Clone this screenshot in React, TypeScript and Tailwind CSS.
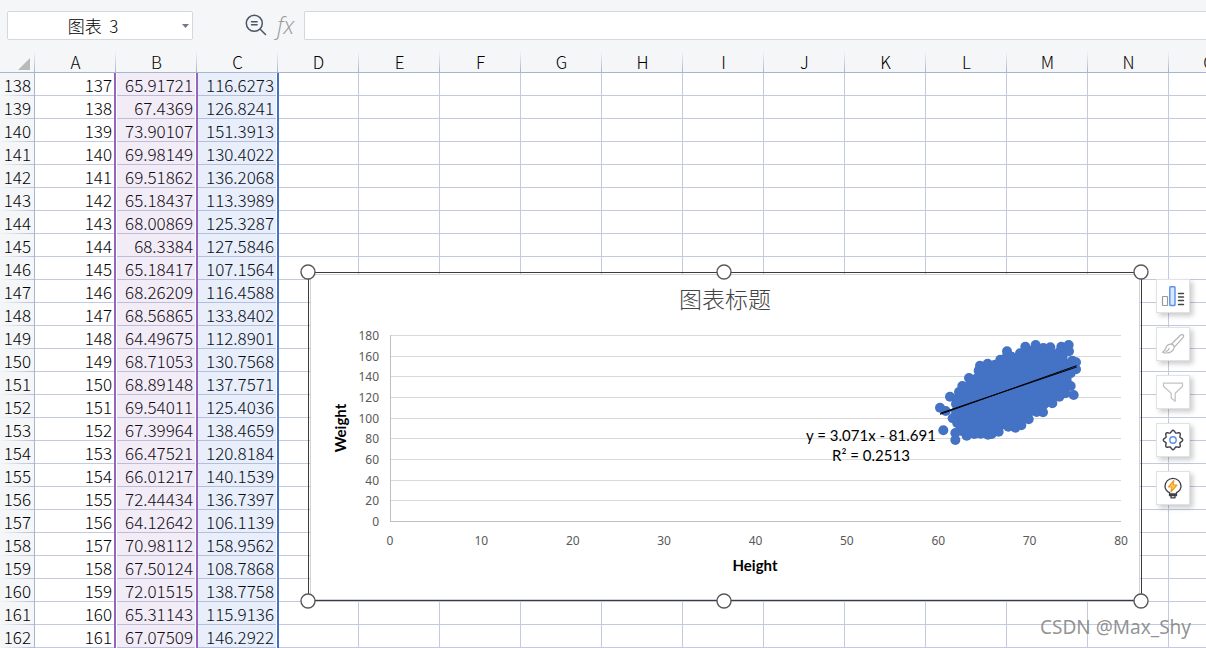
import { useState } from 'react';
import type { ReactNode } from 'react';

const columns = ['A', 'B', 'C', 'D', 'E', 'F', 'G', 'H', 'I', 'J', 'K', 'L', 'M', 'N', 'O'];

const firstRow = 138;

// [height, weight] in columns B and C
const records = [
    ['65.91721', '116.6273'],
    ['67.4369', '126.8241'],
    ['73.90107', '151.3913'],
    ['69.98149', '130.4022'],
    ['69.51862', '136.2068'],
    ['65.18437', '113.3989'],
    ['68.00869', '125.3287'],
    ['68.3384', '127.5846'],
    ['65.18417', '107.1564'],
    ['68.26209', '116.4588'],
    ['68.56865', '133.8402'],
    ['64.49675', '112.8901'],
    ['68.71053', '130.7568'],
    ['68.89148', '137.7571'],
    ['69.54011', '125.4036'],
    ['67.39964', '138.4659'],
    ['66.47521', '120.8184'],
    ['66.01217', '140.1539'],
    ['72.44434', '136.7397'],
    ['64.12642', '106.1139'],
    ['70.98112', '158.9562'],
    ['67.50124', '108.7868'],
    ['72.01515', '138.7758'],
    ['65.31143', '115.9136'],
    ['67.07509', '146.2922'],
];

const yTicks = [180, 160, 140, 120, 100, 80, 60, 40, 20, 0];
const xTicks = [0, 10, 20, 30, 40, 50, 60, 70, 80];

const plot = { left: 82, right: 813, top: 63, bottom: 249 };
const xAt = (v: number) => plot.left + ((plot.right - plot.left) * v) / 80;
const yAt = (v: number) => Math.round(plot.bottom - ((plot.bottom - plot.top) * v) / 180) + 0.5;

// Outer points of the cloud, clockwise
const edgePoints = [
    [108, 222], [113, 205], [117, 186], [127, 168], [147, 144], [176, 122], [180, 107], [203, 101],
    [225, 104], [241, 89], [261, 78], [275, 80], [300, 70], [316, 50], [347, 45], [370, 54],
    [391, 52], [418, 66], [428, 80], [457, 92], [468, 97], [468, 118], [452, 130], [440, 150],
    [452, 168], [436, 190], [418, 200], [397, 220], [369, 247], [350, 246], [326, 268], [304, 286],
    [286, 293], [265, 290], [236, 305], [215, 312], [204, 314], [182, 311], [163, 312], [140, 317],
    [125, 303], [106, 309], [112, 280], [98, 265], [108, 245],
];

const outliers = [
    [60, 233], [77, 243], [90, 200], [70, 301], [106, 330], [261, 64], [424, 50], [446, 45], [447, 64], [461, 195],
];

const handles = [
    [0, 0], [416, 0], [833, 0],
    [0, 329], [416, 329], [833, 329],
];

// Eight-toothed gear outline around (12, 12)
const gear = Array.from({ length: 96 }, (_, i) => {
    const a = (i / 96) * Math.PI * 2;
    const r = 8.6 + 1.1 * Math.cos(a * 8);
    return `${(12 + r * Math.sin(a)).toFixed(2)},${(12 - r * Math.cos(a)).toFixed(2)}`;
}).join(' ');

function ScatterChart() {
    return (
        <svg
            role="img"
            aria-label="图表标题"
            width="834"
            height="330"
            className="absolute left-[308px] top-[221px] overflow-visible"
        >
            <rect x="2" y="2" width="830" height="326" fill="#fff" />
            <rect x="2.5" y="2.5" width="829" height="325" fill="none" stroke="#d4d4d4" />
            <rect x="0.5" y="0.5" width="833" height="328" fill="none" stroke="#3b3b3f" />

            <text x="417" y="36" textAnchor="middle" className="fill-[#444] font-['Noto_Sans_CJK_SC',sans-serif] text-[23px] font-light">
                图表标题
            </text>

            {/* Gridlines and axes */}
            {yTicks.map((v) => (
                <g key={v}>
                    <line x1={plot.left} x2={plot.right} y1={yAt(v)} y2={yAt(v)} stroke={v === 0 ? '#bfbfbf' : '#d9d9d9'} />
                    <text x="71" y={yAt(v) + 4} textAnchor="end" className="fill-[#595959] font-['Noto_Sans',sans-serif] text-[12px]">
                        {v}
                    </text>
                </g>
            ))}
            <line x1="82.5" x2="82.5" y1={plot.top} y2={plot.bottom + 1} stroke="#bfbfbf" />
            {xTicks.map((v) => (
                <text key={v} x={xAt(v)} y="273" textAnchor="middle" className="fill-[#595959] font-['Noto_Sans',sans-serif] text-[12px]">
                    {v}
                </text>
            ))}

            {/* Axis titles */}
            <text x="447" y="299" textAnchor="middle" className="fill-black font-['Lato',sans-serif] text-[15px] font-bold">
                Height
            </text>
            <text
                transform="translate(38 156) rotate(-90)"
                textAnchor="middle"
                className="fill-black font-['Lato',sans-serif] text-[15px] font-bold"
            >
                Weight
            </text>

            {/* Points */}
            <svg x="612" y="58" width="180" height="130" viewBox="0 0 540 390">
                <g fill="#4472c4">
                    <polygon points={edgePoints.map((p) => p.join(',')).join(' ')} />
                    {[...edgePoints, ...outliers].map(([x, y]) => (
                        <circle key={`${x}-${y}`} cx={x} cy={y} r="15" />
                    ))}
                </g>
                <path d="M60 253 470 107M60 250 470 111" stroke="#000" strokeWidth="3" fill="none" />
            </svg>

            <text x="563" y="169" textAnchor="middle" className="fill-black font-['Lato',sans-serif] text-[15px]">
                y = 3.071x - 81.691
            </text>
            <text x="563" y="189" textAnchor="middle" className="fill-black font-['Lato',sans-serif] text-[15px]">
                R² = 0.2513
            </text>

            {handles.map(([x, y]) => (
                <circle key={`${x}-${y}`} cx={x} cy={y} r="7" fill="#fff" stroke="#595959" strokeWidth="1.4" />
            ))}
        </svg>
    );
}

function ToolButton({ label, children }: { label: string; children: ReactNode }) {
    return (
        <button
            type="button"
            aria-label={label}
            className="flex size-[34px] items-center justify-center border border-[#e1e2e5] bg-white shadow-[3px_3px_5px_rgba(0,0,0,0.2)]"
        >
            <svg width="24" height="24" viewBox="0 0 24 24" fill="none" strokeLinecap="round" strokeLinejoin="round">
                {children}
            </svg>
        </button>
    );
}

function ChartTools() {
    return (
        <div className="absolute left-[1156px] top-[228px] flex flex-col gap-[14px]">
            <ToolButton label="图表元素">
                <rect x="1.5" y="12.5" width="5" height="9" rx="0.5" stroke="#999" strokeWidth="1.2" />
                <rect x="8.8" y="2.8" width="5.2" height="18.7" rx="0.8" fill="#d9e8ff" stroke="#5b8fe8" strokeWidth="1.4" />
                <path d="M17.5 9.5h5M17.5 13h5M17.5 16.5h5M17.5 20.5h5" stroke="#444" strokeWidth="1.4" />
            </ToolButton>
            <ToolButton label="图表样式">
                <path
                    d="M10.2 12.2 19.4 3.3c1-1 2.4-.9 2.9-.3.6.7.4 1.8-.5 2.8L13.3 15.2M10.2 12.2c1.5.2 2.8 1.3 3.1 3M10.2 12.2c-2.4-.1-4.3 1-5 3.1-.7 2.2-1.6 3.8-3.7 4.9 3.5 1.5 10.7 1.1 11.8-5M5 19.5c1.5-.5 2.5-1.5 3-3"
                    stroke="#b5b5b5"
                    strokeWidth="1.2"
                />
            </ToolButton>
            <ToolButton label="图表筛选器">
                <path d="M2.5 3.2h19v3l-7.3 7v8.1l-4-3.3v-4.8l-7.7-7z" stroke="#c4c4c4" strokeWidth="1.3" />
            </ToolButton>
            <ToolButton label="设置">
                <polygon points={gear} stroke="#3f3f46" strokeWidth="1.4" />
                <circle cx="12" cy="12" r="3.2" stroke="#5b8fe8" strokeWidth="1.4" />
            </ToolButton>
            <ToolButton label="智能推荐">
                <path
                    d="M8.5 18v-1.3C5.6 15.3 4 13 4 10.3a8 8 0 0 1 16 0c0 2.700-1.600 5-4.500 6.400V18zM8.500 18v1.500h7V18M10 19.500v2.300h4v-2.300"
                    stroke="#3f3f46"
                    strokeWidth="1.3"
                />
                <path d="M12.8 4.5 7.5 11h3.3l-.9 5 6-7h-3.7z" fill="#ffd43b" stroke="#ee9a2f" strokeWidth="1.2" />
            </ToolButton>
        </div>
    );
}

function FormulaBar() {
    const [name, setName] = useState('图表\u00a0\u00a03');
    const [formula, setFormula] = useState('');

    return (
        <div className="flex h-[51px] items-start pt-[11px]">
            <div className="ml-[7px] flex h-[29px] w-[186px] items-center rounded-xs border border-[#d5d7dc] bg-white">
                <input
                    aria-label="名称框"
                    value={name}
                    onChange={(e) => setName(e.target.value)}
                    className="h-full w-[174px] min-w-0 pr-1 text-center text-[17px] font-light outline-none"
                />
                <button type="button" aria-label="展开名称框" className="flex h-full flex-1 items-center">
                    <svg width="7" height="4" viewBox="0 0 7 4">
                        <path d="M0 0h7L3.5 4z" fill="#6f7892" />
                    </svg>
                </button>
            </div>
            <button type="button" aria-label="浏览公式" className="ml-[52px] flex h-[28px] w-[24px] items-center">
                <svg width="22" height="22" viewBox="0 0 22 22" fill="none" stroke="#4b5568" strokeWidth="1.5" strokeLinecap="round">
                    <circle cx="9.3" cy="9.3" r="8" />
                    <path d="M15.2 15.2 20.5 20.5M6.5 7.8h5.6M6.5 10.8h5.6" />
                </svg>
            </button>
            <button
                type="button"
                aria-label="插入函数"
                className="ml-2 h-[28px] w-[24px] text-left font-['Open_Sans',sans-serif] text-[23px] leading-[25px] font-light text-[#999] italic"
            >
                fx
            </button>
            <input
                aria-label="编辑栏"
                value={formula}
                onChange={(e) => setFormula(e.target.value)}
                className="ml-[3px] h-[29px] min-w-0 flex-1 rounded-l-xs border border-r-0 border-[#d5d7dc] bg-white px-2 outline-none"
            />
        </div>
    );
}

function Sheet() {
    return (
        <div className="relative">
            <table className="w-[1250px] table-fixed border-separate border-spacing-0 text-[17px] leading-[22px] font-light">
                <colgroup>
                    <col className="w-[35px]" />
                    {columns.map((c) => (
                        <col key={c} className="w-[81px]" />
                    ))}
                </colgroup>
                <thead>
                    <tr className="h-[22px]">
                        <th className="border-b border-[#a9b4cf] bg-[linear-gradient(to_top,#a9b4cf,#f5f6f8)] bg-[length:1px_100%] bg-right bg-no-repeat p-0">
                            <svg width="12" height="12" viewBox="0 0 12 12" className="mt-1 ml-[18px]">
                                <path d="M12 0v12H0z" fill="#b9b9b9" />
                            </svg>
                        </th>
                        {columns.map((c) => (
                            <th
                                key={c}
                                scope="col"
                                className="border-b border-[#a9b4cf] bg-[linear-gradient(to_top,#a9b4cf,#f5f6f8)] bg-[length:1px_100%] bg-right bg-no-repeat p-0 text-center leading-[21px] font-light"
                            >
                                {c}
                            </th>
                        ))}
                    </tr>
                </thead>
                <tbody>
                    {records.map(([height, weight], i) => (
                        <tr key={i} className="h-[23px]">
                            <th
                                scope="row"
                                className="border-r border-[#a9b4cf] bg-[linear-gradient(to_right,#f5f6f8,#b3bdd6)] bg-[length:100%_1px] bg-bottom bg-no-repeat p-0 pr-[3px] text-right font-light"
                            >
                                {firstRow + i}
                            </th>
                            {columns.map((c) => (
                                <td key={c} className="border-r border-b border-[#c3cadf] bg-white p-0 pt-[2px] pr-[3px] text-right leading-[20px]">
                                    {c === 'A' && firstRow + i - 1}
                                    {c === 'B' && height}
                                    {c === 'C' && weight}
                                </td>
                            ))}
                        </tr>
                    ))}
                </tbody>
            </table>

            {/* Source ranges of the chart */}
            <div className="pointer-events-none absolute top-[22px] bottom-0 left-[114px] w-[84px] border-x-2 border-[#9566bd]">
                <div className="h-full border-x border-white bg-[#9566bd]/12" />
            </div>
            <div className="pointer-events-none absolute top-[22px] bottom-0 left-[198px] w-[81px] border-r-2 border-[#4571c8]">
                <div className="h-full border-r border-white bg-[#4571d8]/12" />
            </div>

            <ScatterChart />
            <ChartTools />

            <span className="absolute bottom-[7px] left-[1040px] font-['Noto_Sans',sans-serif] text-[19px] leading-[28px] whitespace-nowrap text-[#808080]/85">
                CSDN @Max_Shy
            </span>
        </div>
    );
}

export default function App() {
    return (
        <main className="min-h-screen overflow-hidden bg-[#f5f6f8] font-['Noto_Sans_CJK_SC',sans-serif] text-black">
            <FormulaBar />
            <Sheet />
        </main>
    );
}
